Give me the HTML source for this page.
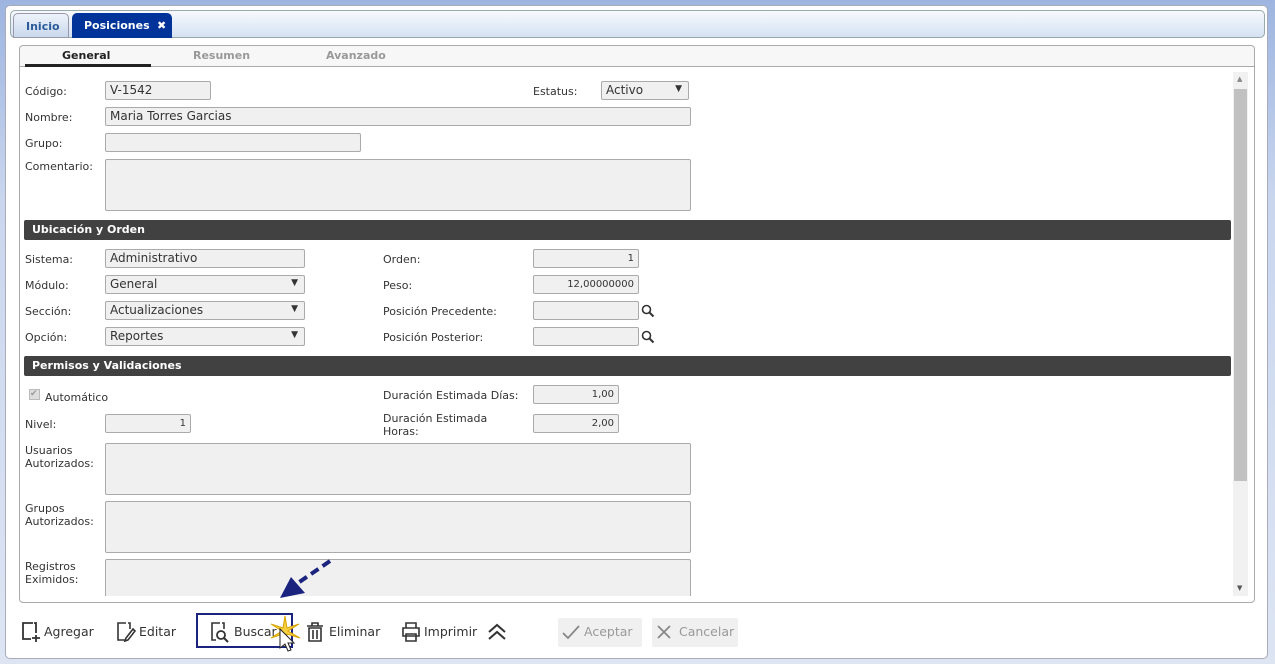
<!DOCTYPE html>
<html><head><meta charset="utf-8"><style>
*{box-sizing:border-box;margin:0;padding:0}
body{width:1275px;height:664px;overflow:hidden;background:linear-gradient(#9db5e0,#c9d6ee 30%,#dde5f3);font-family:"DejaVu Sans",Verdana,sans-serif;font-size:11px;color:#333;position:relative}
.a{position:absolute;white-space:nowrap}
#outer{left:5px;top:5px;width:1263px;height:654px;background:#fff;border:1px solid #aab;border-radius:5px}
#tabbar{left:10px;top:10px;width:1255px;height:28px;background:linear-gradient(#f7f9fd,#d5e2f3);border:1px solid #9aa;border-radius:5px}
.tab{top:13px;height:25px;font-weight:bold;font-size:11px;padding:6px 0 0 12px;border-radius:5px 5px 0 0}
#panel{left:19px;top:45px;width:1236px;height:558px;border:1px solid #aaa;border-radius:4px;background:#fff}
#ph{left:20px;top:46px;width:1234px;height:21px;background:#f7f7f7;border-bottom:1px solid #aaa;border-radius:4px 4px 0 0}
.st{top:49px;font-weight:bold;font-size:11px;color:#999}
.lb{font-size:11px;color:#333}
.in{background:#f0f0f0;border:1px solid #aaa;border-radius:2px;height:19px;font-size:12px;padding:1px 4px;color:#333}
.r{text-align:right;font-size:10px;padding-top:3px}
.sel::after{content:"▼";position:absolute;right:6px;top:2px;font-size:9px;color:#333}
.sec{left:24px;width:1207px;height:20px;background:#414141;color:#fff;font-weight:bold;font-size:11px;padding:3px 8px;border-radius:2px}
.btn{top:624px;font-size:12.5px;color:#333}
</style></head><body>
<div id="outer" class="a"></div>
<div id="tabbar" class="a"></div>
<div class="a tab" style="left:13px;width:56px;background:linear-gradient(#eef3fa,#c9d8ec);border:1px solid #99a;color:#2a5b9a">Inicio</div>
<div class="a tab" style="left:72px;width:100px;background:#003399;color:#fff">Posiciones<span class="a" style="left:85px;top:6px">✖</span></div>
<div id="panel" class="a"></div>
<div id="ph" class="a"></div>
<div class="a st" style="left:62px;color:#222">General</div>
<div class="a" style="left:25px;top:64px;width:126px;height:3px;background:#222"></div>
<div class="a st" style="left:193px">Resumen</div>
<div class="a st" style="left:326px">Avanzado</div>
<div class="a" style="left:1233px;top:72px;width:15px;height:524px;background:#f1f1f1"></div>
<div class="a" style="left:1234px;top:89px;width:13px;height:392px;background:#c1c1c1"></div>
<div class="a" style="left:1237px;top:75px;font-size:7px;color:#888">▲</div>
<div class="a" style="left:1237px;top:584px;font-size:7px;color:#555">▼</div>

<div class="a lb" style="left:25px;top:85px">Código:</div>
<div class="a in" style="left:105px;top:81px;width:106px">V-1542</div>
<div class="a lb" style="left:533px;top:85px">Estatus:</div>
<div class="a in sel" style="left:601px;top:81px;width:88px;background:#f0f0f0">Activo</div>
<div class="a lb" style="left:25px;top:111px">Nombre:</div>
<div class="a in" style="left:105px;top:107px;width:586px">Maria Torres Garcias</div>
<div class="a lb" style="left:25px;top:137px">Grupo:</div>
<div class="a in" style="left:105px;top:133px;width:256px"></div>
<div class="a lb" style="left:25px;top:160px">Comentario:</div>
<div class="a in" style="left:105px;top:159px;width:586px;height:52px"></div>

<div class="a sec" style="top:220px">Ubicación y Orden</div>
<div class="a lb" style="left:25px;top:253px">Sistema:</div>
<div class="a in" style="left:105px;top:249px;width:200px">Administrativo</div>
<div class="a lb" style="left:25px;top:279px">Módulo:</div>
<div class="a in sel" style="left:105px;top:275px;width:200px">General</div>
<div class="a lb" style="left:25px;top:305px">Sección:</div>
<div class="a in sel" style="left:105px;top:301px;width:200px">Actualizaciones</div>
<div class="a lb" style="left:25px;top:331px">Opción:</div>
<div class="a in sel" style="left:105px;top:327px;width:200px">Reportes</div>
<div class="a lb" style="left:383px;top:253px">Orden:</div>
<div class="a in r" style="left:533px;top:249px;width:106px">1</div>
<div class="a lb" style="left:383px;top:279px">Peso:</div>
<div class="a in r" style="left:533px;top:275px;width:106px">12,00000000</div>
<div class="a lb" style="left:383px;top:305px">Posición Precedente:</div>
<div class="a in" style="left:533px;top:301px;width:106px"></div>
<div class="a lb" style="left:383px;top:331px">Posición Posterior:</div>
<div class="a in" style="left:533px;top:327px;width:106px"></div>
<svg class="a" style="left:641px;top:304px" width="14" height="14"><circle cx="5.5" cy="5.5" r="4" fill="none" stroke="#333" stroke-width="1.6"/><path d="M8.5 8.5L12.5 12.5" stroke="#333" stroke-width="2"/></svg>
<svg class="a" style="left:641px;top:330px" width="14" height="14"><circle cx="5.5" cy="5.5" r="4" fill="none" stroke="#333" stroke-width="1.6"/><path d="M8.5 8.5L12.5 12.5" stroke="#333" stroke-width="2"/></svg>

<div class="a sec" style="top:356px">Permisos y Validaciones</div>
<div class="a" style="left:29px;top:389px;width:11px;height:11px;background:#ddd;border:1px solid #bbb;font-size:9px;color:#999;line-height:9px">✔</div>
<div class="a lb" style="left:45px;top:391px">Automático</div>
<div class="a lb" style="left:25px;top:418px">Nivel:</div>
<div class="a in r" style="left:105px;top:414px;width:86px">1</div>
<div class="a lb" style="left:383px;top:389px">Duración Estimada Días:</div>
<div class="a in r" style="left:533px;top:385px;width:86px">1,00</div>
<div class="a lb" style="left:383px;top:412px;line-height:13px">Duración Estimada<br>Horas:</div>
<div class="a in r" style="left:533px;top:414px;width:86px">2,00</div>
<div class="a lb" style="left:25px;top:444px;line-height:13px">Usuarios<br>Autorizados:</div>
<div class="a in" style="left:105px;top:443px;width:586px;height:52px"></div>
<div class="a lb" style="left:25px;top:502px;line-height:13px">Grupos<br>Autorizados:</div>
<div class="a in" style="left:105px;top:501px;width:586px;height:52px"></div>
<div class="a lb" style="left:25px;top:560px;line-height:13px">Registros<br>Eximidos:</div>
<div class="a in" style="left:105px;top:559px;width:586px;height:37px;border-bottom:none;border-radius:2px 2px 0 0"></div>

<svg class="a" style="left:275px;top:555px" width="70" height="50"><path d="M55 6L20 30" stroke="#1a237e" stroke-width="4" stroke-dasharray="9 5"/><path d="M5 43L30 38L16 22Z" fill="#1a237e"/></svg>

<svg class="a" style="left:20px;top:621px" width="22" height="22"><path d="M13 2H3V18H11M14 2H16V12M16 14V21M12 17H20" fill="none" stroke="#333" stroke-width="1.8"/></svg>
<div class="a btn" style="left:44px">Agregar</div>
<svg class="a" style="left:115px;top:621px" width="22" height="22"><path d="M11 2H3V19H10M13 2H15V8M18 8L11 17L10 20L13 19L20 10Z" fill="none" stroke="#333" stroke-width="1.6"/></svg>
<div class="a btn" style="left:139px">Editar</div>
<div class="a" style="left:196px;top:613px;width:97px;height:35px;border:2px solid #1a237e"></div>
<svg class="a" style="left:209px;top:621px" width="22" height="22"><path d="M11 2H3V19H7M13 2H15V8" fill="none" stroke="#333" stroke-width="1.6"/><circle cx="12" cy="14" r="4" fill="none" stroke="#333" stroke-width="1.8"/><path d="M15 17L19 21" stroke="#333" stroke-width="2"/></svg>
<div class="a btn" style="left:234px">Buscar</div>
<svg class="a" style="left:268px;top:614px" width="34" height="34"><path d="M17 2L19 14L31 10L20 17L32 24L19 20L17 32L15 20L3 24L14 17L3 10L15 14Z" fill="#f6d040" stroke="#d9a400" stroke-width="1"/></svg>
<svg class="a" style="left:279px;top:628px" width="16" height="30"><path d="M1 1V20L6 16L9 23L12 22L9 15L15 15Z" fill="#fff" stroke="#222" stroke-width="1"/></svg>
<svg class="a" style="left:305px;top:621px" width="20" height="22"><path d="M2 5H18M7 5V2H13V5M4 7H16V20H4Z M8 9V18M12 9V18" fill="none" stroke="#333" stroke-width="1.6"/></svg>
<div class="a btn" style="left:329px">Eliminar</div>
<svg class="a" style="left:400px;top:621px" width="22" height="22"><path d="M6 7V2H16V7M3 7H19V15H3Z M6 13H16V20H6Z" fill="none" stroke="#333" stroke-width="1.6"/></svg>
<div class="a btn" style="left:424px">Imprimir</div>
<svg class="a" style="left:486px;top:623px" width="22" height="18"><path d="M3 9L11 2L19 9M3 16L11 9L19 16" fill="none" stroke="#333" stroke-width="2"/></svg>
<div class="a" style="left:558px;top:618px;width:84px;height:29px;background:#f0f0f0;border-radius:2px"></div>
<svg class="a" style="left:561px;top:623px" width="20" height="18"><path d="M2 10L7 15L18 3" fill="none" stroke="#888" stroke-width="1.8"/></svg>
<div class="a btn" style="left:584px;color:#999">Aceptar</div>
<div class="a" style="left:652px;top:618px;width:86px;height:29px;background:#f0f0f0;border-radius:2px"></div>
<svg class="a" style="left:655px;top:623px" width="18" height="18"><path d="M3 3L15 15M15 3L3 15" fill="none" stroke="#888" stroke-width="1.8"/></svg>
<div class="a btn" style="left:679px;color:#999">Cancelar</div>
</body></html>
